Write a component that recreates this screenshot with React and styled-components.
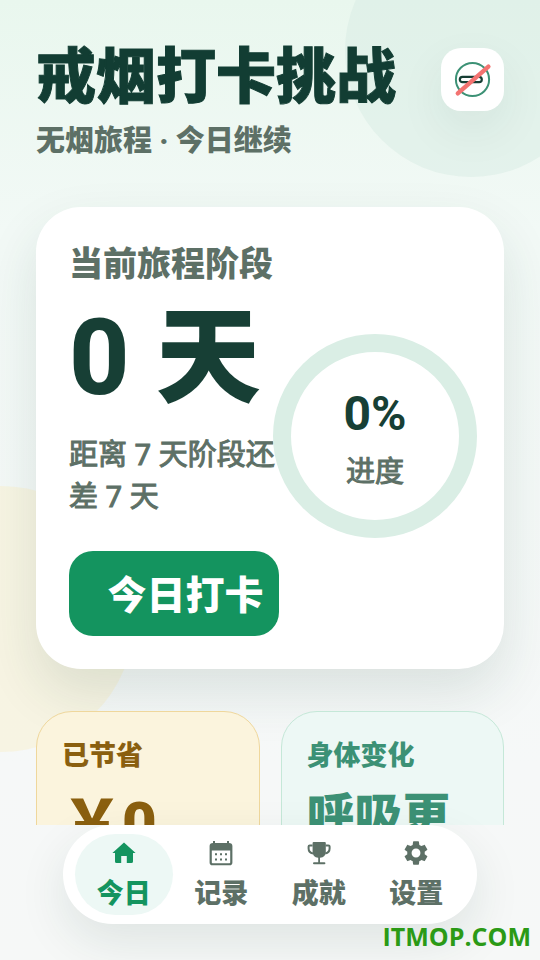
import React from 'react'
import styled, { createGlobalStyle } from 'styled-components'

const GlobalStyle = createGlobalStyle`
  * {
    box-sizing: border-box;
  }

  body {
    margin: 0;
    font-family: Roboto, 'Noto Sans CJK SC', sans-serif;
    color: #173f35;
  }

  h1, h2, p {
    margin: 0;
  }
`

const StyledPage = styled.div`
  position: relative;
  isolation: isolate;
  display: flex;
  flex-direction: column;
  height: 100vh;
  overflow: hidden;
  background: linear-gradient(to bottom, #e9f7ee 0%, #f2f9f6 24%, #f6f8f8 80%, #f6f8f7 100%);
`

const Blob = styled.span`
  position: absolute;
  z-index: -1;
  width: ${(props) => props.$size}px;
  height: ${(props) => props.$size}px;
  border-radius: 50%;
`

const MintBlob = styled(Blob)`
  top: -75px;
  right: -57px;
  background: rgba(216, 236, 228, 0.5);
`

const SandBlob = styled(Blob)`
  bottom: 208px;
  left: -132px;
  background: rgba(248, 242, 214, 0.6);
`

const Content = styled.main`
  flex: 1;
  min-height: 0;
  padding: 42px 36px 0;
  overflow: hidden;
`

const Header = styled.header`
  display: flex;
  justify-content: space-between;
  align-items: flex-start;
  padding-top: 6px;
`

const Title = styled.h1`
  margin-top: -3px;
  font-size: 60px;
  line-height: 66px;
  font-weight: 900;
  color: #123d33;
  -webkit-text-stroke: 1px currentColor;
`

const Subtitle = styled.p`
  margin-top: 9px;
  font-size: 29px;
  line-height: 42px;
  font-weight: 900;
  color: #5d7066;
`

const LogoButton = styled.button`
  display: flex;
  justify-content: center;
  align-items: center;
  width: 63px;
  height: 63px;
  padding: 0;
  border: none;
  border-radius: 20px;
  background: #fff;
  box-shadow: 0 18px 48px rgba(23, 63, 53, 0.07);
`

const JourneyCard = styled.section`
  display: grid;
  grid-template-columns: 210px minmax(0, 1fr);
  align-items: center;
  margin-top: 45px;
  padding: 33px;
  border-radius: 45px;
  background: #fff;
  box-shadow: 0 24px 54px rgba(23, 63, 53, 0.12);
`

const CardLabel = styled.h2`
  font-size: 34px;
  line-height: 48px;
  font-weight: 900;
  color: #5d7066;
`

const Days = styled.p`
  margin-top: 8px;
  font-size: 105px;
  line-height: 126px;
  font-weight: 800;
  white-space: nowrap;
`

const Hint = styled.p`
  margin-top: 11px;
  font-family: 'Noto Sans', 'Noto Sans CJK SC', sans-serif;
  font-size: 29px;
  line-height: 42px;
  font-weight: 400;
  color: #5d7066;
  -webkit-text-stroke: 1px currentColor;
`

const CheckInButton = styled.button`
  display: block;
  width: 100%;
  height: 85px;
  margin-top: 34px;
  padding: 0 15px 3px 38px;
  border: none;
  border-radius: 24px;
  background: #14945f;
  color: #fff;
  font-family: inherit;
  font-size: 39px;
  font-weight: 900;
  white-space: nowrap;
`

const RingSlot = styled.div`
  display: flex;
  justify-content: center;
  padding-bottom: 4px;
`

const Ring = styled.div`
  flex: none;
  display: flex;
  flex-direction: column;
  align-items: center;
  justify-content: center;
  gap: 10px;
  width: 204px;
  height: 204px;
  padding-top: 7px;
  border: 18px solid #daeee5;
  border-radius: 50%;
  background: #fff;
`

const Percent = styled.strong`
  font-size: 48px;
  line-height: 54px;
  font-weight: 700;
`

const RingLabel = styled.span`
  font-size: 29px;
  line-height: 42px;
  font-weight: 400;
  color: #5d7066;
  -webkit-text-stroke: 1px currentColor;
`

const Stats = styled.section`
  display: grid;
  grid-template-columns: 1fr 1fr;
  gap: 21px;
  margin-top: 42px;
`

const StatCard = styled.article`
  padding: 26px 25px;
  border: 1px solid ${(props) => props.$border};
  border-radius: 36px;
  background: ${(props) => props.$bg};
  color: ${(props) => props.$color};
`

const StatLabel = styled.h2`
  font-size: 27px;
  line-height: 36px;
  font-weight: 900;
`

const StatValue = styled.p`
  margin-top: 10px;
  font-size: ${(props) => (props.$large ? 60 : 48)}px;
  line-height: ${(props) => (props.$large ? 80 : 66)}px;
  font-weight: 900;
`

const TabBar = styled.nav`
  position: relative;
  display: grid;
  grid-template-columns: repeat(4, 1fr);
  margin: 0 63px 36px;
  padding: 9px 12px;
  border-radius: 50px;
  background: #fff;
  box-shadow: 0 18px 48px rgba(23, 63, 53, 0.1);
`

const Tab = styled.a`
  display: flex;
  flex-direction: column;
  align-items: center;
  height: 81px;
  padding-top: 5px;
  gap: 8px;
  border-radius: 41px;
  background: ${(props) => (props.$active ? '#edf8f5' : 'transparent')};
  color: ${(props) => (props.$active ? '#14945f' : '#5d7066')};
  font-size: 27px;
  line-height: 39px;
  font-weight: 900;
  text-decoration: none;
`

const Watermark = styled.span`
  position: absolute;
  right: 9px;
  bottom: 8px;
  font-family: 'Open Sans', sans-serif;
  font-size: 25px;
  line-height: 32px;
  font-weight: 700;
  color: #2b9a16;
`

const NoSmokingLogo = () => (
  <svg width='42' height='42' viewBox='0 0 42 42' fill='none' aria-hidden='true'>
    <circle cx='20.5' cy='20.5' r='16.6' stroke='#3c9175' strokeWidth='2' />
    <rect x='7.8' y='17.8' width='22' height='5.4' rx='2.7' stroke='#173f35' strokeWidth='2.2' />
    <path d='M5.8 34.4L36.4 7.6' stroke='#f37371' strokeWidth='4.4' strokeLinecap='round' />
  </svg>
)

const HomeIcon = () => (
  <svg width='28' height='28' viewBox='0 0 28 28' fill='currentColor' aria-hidden='true'>
    <path d='M14 3.4L2.4 14H5V22.4Q5 24 6.6 24H11.2V17H16.8V24H21.4Q23 24 23 22.4V14H25.6Z' />
  </svg>
)

const CalendarIcon = () => (
  <svg width='28' height='28' viewBox='0 0 28 28' fill='currentColor' aria-hidden='true'>
    <path
      fillRule='evenodd'
      d='M6 2H8V4H20V2H22V4Q25.4 4 25.4 7V23.4Q25.4 26.2 22.6 26.2H5.4Q2.6 26.2 2.6 23.4V7Q2.6 4 6 4ZM4.8 11.4V23.4Q4.8 24.2 5.6 24.2H22.4Q23.2 24.2 23.2 23.4V11.4Z'
    />
    <path d='M8 14.2h2v2H8zM13 14.2h2v2h-2zM18 14.2h2v2h-2zM8 19.4h2v2H8zM13 19.4h2v2h-2zM18 19.4h2v2h-2z' />
  </svg>
)

const TrophyIcon = () => (
  <svg width='28' height='28' viewBox='0 0 28 28' fill='none' aria-hidden='true'>
    <path
      d='M8.6 3H19.8Q20.8 3 20.8 4V12.5Q20.8 18.4 15 18.8V23.2H19.4Q20.4 23.2 20.4 24.2T19.4 25.2H9Q8 25.2 8 24.2T9 23.2H13.2V18.8Q7.6 18.4 7.6 12.5V4Q7.6 3 8.6 3Z'
      fill='currentColor'
    />
    <path
      d='M7.6 6.4H4.8Q3.6 6.4 3.6 7.6V9.4Q3.6 13.4 8 14.4M20.6 6.4H23.4Q24.6 6.4 24.6 7.6V9.4Q24.6 13.4 20.2 14.4'
      stroke='currentColor'
      strokeWidth='2'
    />
  </svg>
)

const SettingsIcon = () => (
  <svg width='28' height='28' viewBox='0 0 24 24' fill='currentColor' aria-hidden='true'>
    <path d='M12 15.8A3.8 3.8 0 1 1 12 8.2 3.8 3.8 0 0 1 12 15.8M19.43 12.97C19.47 12.65 19.5 12.33 19.5 12S19.47 11.34 19.43 11L21.54 9.37C21.73 9.22 21.78 8.95 21.66 8.73L19.66 5.27C19.54 5.05 19.27 4.96 19.05 5.05L16.56 6.05C16.04 5.66 15.5 5.32 14.87 5.07L14.5 2.42C14.46 2.18 14.25 2 14 2H10C9.75 2 9.54 2.18 9.5 2.42L9.13 5.07C8.5 5.32 7.96 5.66 7.44 6.05L4.95 5.05C4.73 4.96 4.46 5.05 4.34 5.27L2.34 8.73C2.21 8.95 2.27 9.22 2.46 9.37L4.57 11C4.53 11.34 4.5 11.67 4.5 12S4.53 12.65 4.57 12.97L2.46 14.63C2.27 14.78 2.21 15.05 2.34 15.27L4.34 18.73C4.46 18.95 4.73 19.03 4.95 18.95L7.44 17.94C7.96 18.34 8.5 18.68 9.13 18.93L9.5 21.58C9.54 21.82 9.75 22 10 22H14C14.25 22 14.46 21.82 14.5 21.58L14.87 18.93C15.5 18.67 16.04 18.34 16.56 17.94L19.05 18.95C19.27 19.03 19.54 18.95 19.66 18.73L21.66 15.27C21.78 15.05 21.73 14.78 21.54 14.63Z' />
  </svg>
)

const tabs = [
  { id: 'today', label: '今日', Icon: HomeIcon },
  { id: 'records', label: '记录', Icon: CalendarIcon },
  { id: 'awards', label: '成就', Icon: TrophyIcon },
  { id: 'settings', label: '设置', Icon: SettingsIcon },
]

const App = () => {
  return (
    <>
      <GlobalStyle />
      <StyledPage>
        <MintBlob $size={252} />
        <SandBlob $size={266} />

        <Content>
          <Header>
            <div>
              <Title>戒烟打卡挑战</Title>
              <Subtitle>无烟旅程 · 今日继续</Subtitle>
            </div>
            <LogoButton type='button'>
              <NoSmokingLogo />
            </LogoButton>
          </Header>

          <JourneyCard>
            <div>
              <CardLabel>当前旅程阶段</CardLabel>
              <Days>0 天</Days>
              <Hint>距离 7 天阶段还差 7 天</Hint>
              <CheckInButton type='button'>今日打卡</CheckInButton>
            </div>
            <RingSlot>
              <Ring>
                <Percent>0%</Percent>
                <RingLabel>进度</RingLabel>
              </Ring>
            </RingSlot>
          </JourneyCard>

          <Stats>
            <StatCard $bg='#fbf4dd' $border='#efd79c' $color='#8a5f0f'>
              <StatLabel>已节省</StatLabel>
              <StatValue $large>￥0</StatValue>
            </StatCard>
            <StatCard $bg='#edf8f5' $border='#c5e8d8' $color='#3c9175'>
              <StatLabel>身体变化</StatLabel>
              <StatValue>呼吸更</StatValue>
            </StatCard>
          </Stats>
        </Content>

        <TabBar>
          {tabs.map(({ id, label, Icon }) => (
            <Tab key={id} href={`#${id}`} $active={id === 'today'}>
              <Icon />
              {label}
            </Tab>
          ))}
        </TabBar>
        <Watermark>ITMOP.COM</Watermark>
      </StyledPage>
    </>
  )
}

export default App
